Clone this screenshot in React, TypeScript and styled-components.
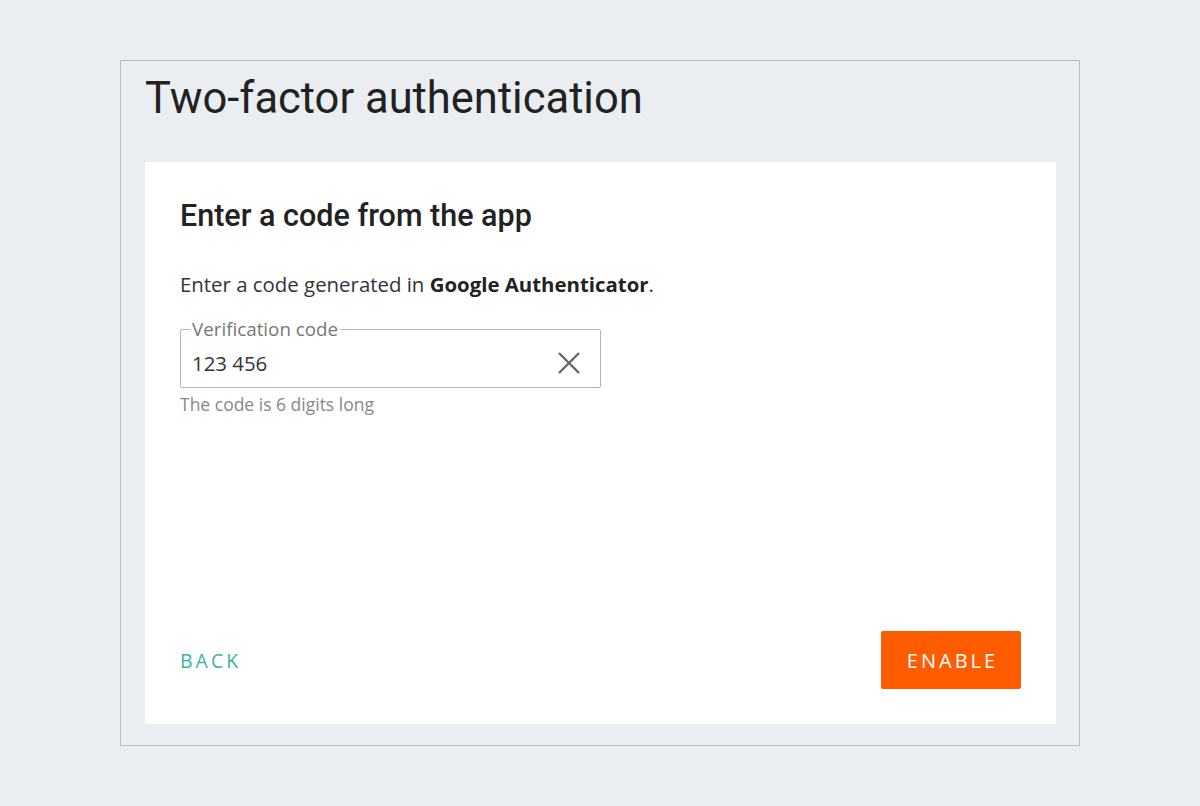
import React from "react";
import styled, { createGlobalStyle } from "styled-components";

const Global = createGlobalStyle`
  html, body { margin: 0; padding: 0; background: #eaeef1; }
  body { font-family: "Open Sans", sans-serif; }
`;

const Page = styled.div`
  padding: 60px 120px 0;
`;

const Frame = styled.div`
  border: 1px solid #b9bcbf;
  height: 686px;
  box-sizing: border-box;
  padding: 0 23px 21px 24px;
  display: flex;
  flex-direction: column;
`;

const Title = styled.h1`
  font-family: Roboto, sans-serif;
  font-weight: 400;
  font-size: 43.5px;
  color: #222;
  margin: 0;
  height: 101px;
  line-height: 76px;
`;

const Card = styled.div`
  background: #fff;
  flex: 1;
  padding: 34px 35px 35px;
  display: flex;
  flex-direction: column;
`;

const Heading = styled.h2`
  font-family: Roboto, sans-serif;
  font-weight: 500;
  font-size: 30.5px;
  color: #222;
  margin: 0 0 34px;
  line-height: 40px;
`;

const Text = styled.p`
  font-size: 20.4px;
  color: #333;
  margin: 0 0 20px;
  line-height: 28px;
  b { color: #222; font-weight: 700; }
`;

const Field = styled.fieldset`
  width: 421px;
  box-sizing: border-box;
  border: 1px solid #b5b5b5;
  border-radius: 2px;
  margin: 0;
  padding: 0 10px 0 11px;
  legend {
    font-size: 18.8px;
    color: #777;
    padding: 0 2px 0 1px;
    margin-left: -1px;
    line-height: 22px;
  }
`;

const Row = styled.div`
  height: 45px;
  display: flex;
  align-items: center;
  padding-bottom: 2px;
`;

const Value = styled.span`
  flex: 1;
  font-size: 20.4px;
  color: #333;
`;

const Clear = styled.svg`
  margin-right: 9px;
`;

const Helper = styled.div`
  font-size: 17.5px;
  color: #888;
  margin-top: 4px;
`;

const Actions = styled.div`
  margin-top: auto;
  display: flex;
  justify-content: space-between;
  align-items: center;
`;

const Back = styled.button`
  background: none;
  border: none;
  padding: 0;
  font-family: "Open Sans", sans-serif;
  font-size: 19.5px;
  letter-spacing: 3px;
  color: #3bb3a3;
`;

const Enable = styled.button`
  background: #ff5c00;
  border: none;
  border-radius: 2px;
  width: 140px;
  height: 58px;
  color: #fff;
  font-family: "Open Sans", sans-serif;
  font-size: 20px;
  letter-spacing: 3px;
  padding: 0 0 0 3px;
`;

export default function App() {
  return (
    <>
      <Global />
      <Page>
        <Frame>
          <Title>Two-factor authentication</Title>
          <Card>
            <Heading>Enter a code from the app</Heading>
            <Text>
              Enter a code generated in <b>Google Authenticator</b>.
            </Text>
            <Field>
              <legend>Verification code</legend>
              <Row>
                <Value>123 456</Value>
                <Clear width="24" height="24" viewBox="0 0 24 24">
                  <path d="M2 2L22 22M22 2L2 22" stroke="#666" strokeWidth="2.4" />
                </Clear>
              </Row>
            </Field>
            <Helper>The code is 6 digits long</Helper>
            <Actions>
              <Back>BACK</Back>
              <Enable>ENABLE</Enable>
            </Actions>
          </Card>
        </Frame>
      </Page>
    </>
  );
}
